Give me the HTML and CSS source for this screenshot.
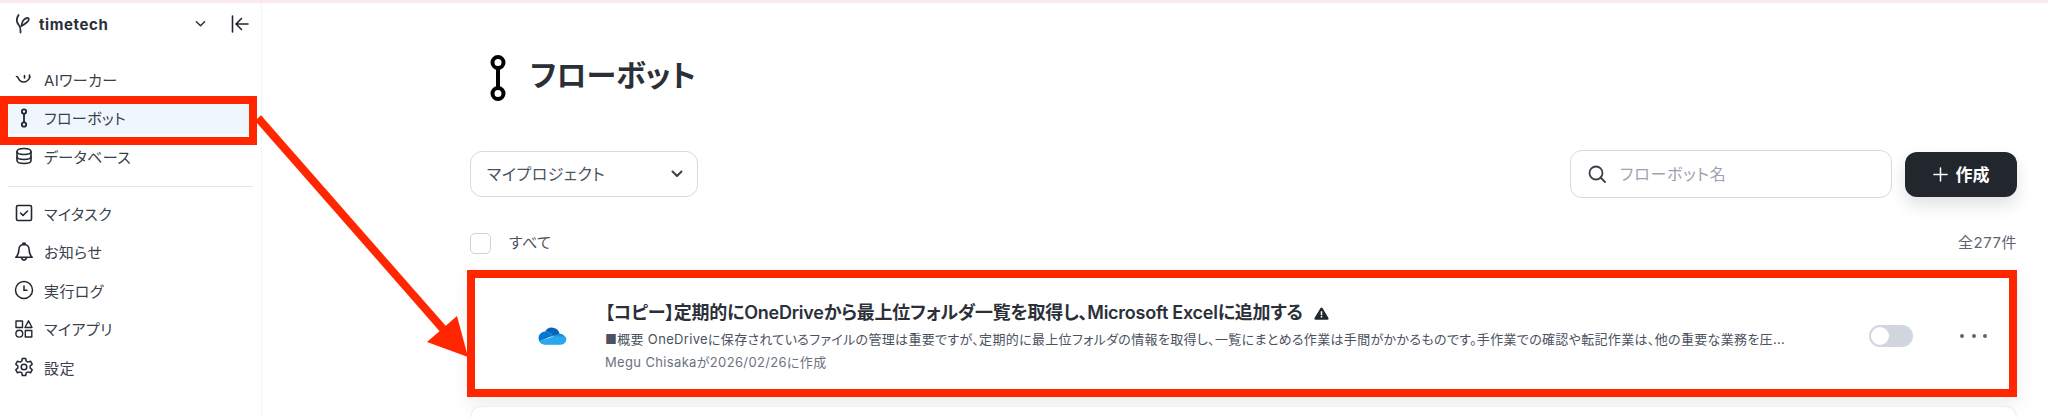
FILE: index.html
```html
<!DOCTYPE html>
<html lang="ja">

<head>
    <meta charset="UTF-8">
    <meta name="viewport" content="width=device-width, initial-scale=1.0">
    <title>フローボット</title>
    <link rel="stylesheet" href="styles.css">
</head>

<body>
    <div class="top-strip"></div>
    <div class="app">
        <aside class="sidebar">
            <div class="workspace">
                <svg class="logo" viewBox="0 0 15 20" fill="none" stroke="#2b3038" stroke-width="1.8" stroke-linecap="round"><path d="M2.5 1C.4 4.500.6 8.500 2.800 11c1.600 1.800 1.900 4.500 1.700 7.500"/><path d="M5.500 11.500c.4-3.500 2.500-7 5.500-7.500 2.300-.3 2.500 2 .2 4C9.500 9.500 7.500 11 5 12.200"/></svg>
                <span class="workspace-name">timetech</span>
                <svg class="workspace-chevron" viewBox="0 0 12 8" fill="none" stroke="#2b3038" stroke-width="1.6" stroke-linecap="round" stroke-linejoin="round"><path d="M1.500 1.500 6 6l4.500-4.500"/></svg>
                <svg class="collapse" viewBox="0 0 18 18" fill="none" stroke="#22272e" stroke-width="1.6" stroke-linecap="round" stroke-linejoin="round"><path d="M1.500 1v16M17 9H5.500M10.500 3.500 5 9l5.500 5.500"/></svg>
            </div>
            <nav class="nav-group">
                <a class="nav-item">
                    <svg class="nav-icon" viewBox="0 0 20 20" fill="none" stroke="#22272e" stroke-width="1.6" stroke-linecap="round"><path d="M2.500 7.500c1.200 0 1.500 1 2 2 .9 2 2.500 3.500 5 3.500 3 0 5-1.500 6.500-5"/><path d="M10.500 6.500v2.500M15.500 6v2"/></svg>
                    <span>AIワーカー</span>
                </a>
                <a class="nav-item active">
                    <svg class="nav-icon" viewBox="0 0 20 20" fill="none" stroke="#22272e" stroke-width="1.8"><circle cx="10" cy="3.500" r="2.200"/><circle cx="10" cy="16.500" r="2.200"/><path d="M10 5.500v9"/></svg>
                    <span>フローボット</span>
                </a>
                <a class="nav-item">
                    <svg class="nav-icon" viewBox="0 0 20 20" fill="none" stroke="#22272e" stroke-width="1.6"><path d="M3 5.500C3 3.500 6 2.500 10 2.500s7 1 7 3v9c0 2-3 3-7 3s-7-1-7-3z"/><path d="M3 5.500c0 2 3 3 7 3s7-1 7-3M3 10.500c0 2 3 3 7 3s7-1 7-3"/></svg>
                    <span>データベース</span>
                </a>
            </nav>
            <div class="nav-divider"></div>
            <nav class="nav-group">
                <a class="nav-item">
                    <svg class="nav-icon" viewBox="0 0 20 20" fill="none" stroke="#22272e" stroke-width="1.6" stroke-linecap="round" stroke-linejoin="round"><rect x="2.500" y="2.500" width="15" height="15" rx="1.500"/><path d="m6.500 10 2.500 2.500L13.500 8"/></svg>
                    <span>マイタスク</span>
                </a>
                <a class="nav-item">
                    <svg class="nav-icon" viewBox="0 0 20 20" fill="none" stroke="#22272e" stroke-width="1.6" stroke-linejoin="round"><path d="M10 2.500c-3.500 0-5.200 2.700-5.200 5.800 0 3-1 5.200-3 7h16.400c-2-1.800-3-4-3-7 0-3.100-1.700-5.800-5.200-5.800z"/><path d="M8.500 2.500a1.500 1.500 0 0 1 3 0M7.500 15.500c.3 1.500 1.300 2.500 2.500 2.500s2.200-1 2.500-2.500"/></svg>
                    <span>お知らせ</span>
                </a>
                <a class="nav-item">
                    <svg class="nav-icon" viewBox="0 0 20 20" fill="none" stroke="#22272e" stroke-width="1.5" stroke-linecap="round"><circle cx="10" cy="10" r="8.500"/><path d="M10 6v4.300h3"/></svg>
                    <span>実行ログ</span>
                </a>
                <a class="nav-item">
                    <svg class="nav-icon" viewBox="0 0 20 20" fill="none" stroke="#22272e" stroke-width="1.4" stroke-linejoin="round"><rect x="2" y="2" width="6.500" height="6.500"/><path d="M14.500 1.800 18 8.500h-7z"/><circle cx="5.300" cy="14.700" r="3.400"/><rect x="11.300" y="11.500" width="6.500" height="6.500"/></svg>
                    <span>マイアプリ</span>
                </a>
                <a class="nav-item">
                    <svg class="nav-icon" viewBox="0 0 20 20" fill="none" stroke="#22272e" stroke-width="1.5" stroke-linejoin="round"><path d="M8.300 1.500h3.400l.5 2.600 1.800 1 2.500-.9 1.700 3-2 1.700v2.200l2 1.700-1.700 3-2.500-.9-1.800 1-.5 2.600H8.300l-.5-2.600-1.800-1-2.500.9-1.700-3 2-1.700V8.900l-2-1.700 1.700-3 2.500.9 1.800-1z"/><circle cx="10" cy="10" r="2.800"/></svg>
                    <span>設定</span>
                </a>
            </nav>
        </aside>

        <main class="content">
            <div class="page-title">
                <svg class="title-icon" viewBox="0 0 16 46" fill="none" stroke="#000" stroke-width="4"><circle cx="8" cy="7.500" r="5.500"/><circle cx="8" cy="38.500" r="5.500"/><path d="M8 13v20"/></svg>
                <h1>フローボット</h1>
            </div>

            <div class="toolbar">
                <div class="project-select">
                    <span>マイプロジェクト</span>
                    <svg viewBox="0 0 12 8" fill="none" stroke="#3a404a" stroke-width="2" stroke-linecap="round" stroke-linejoin="round"><path d="M1.500 1.500 6 6l4.500-4.500"/></svg>
                </div>
                <div class="toolbar-right">
                    <div class="search-box">
                        <svg viewBox="0 0 18 18" fill="none" stroke="#3a404a" stroke-width="1.8" stroke-linecap="round"><circle cx="8" cy="8" r="6.500"/><path d="m12.500 12.500 4.500 4.500"/></svg>
                        <span>フローボット名</span>
                    </div>
                    <button class="create-btn" type="button">
                        <svg viewBox="0 0 16 16" fill="none" stroke="#fff" stroke-width="1.6" stroke-linecap="round"><path d="M8 1v14M1 8h14"/></svg>
                        <span>作成</span>
                    </button>
                </div>
            </div>

            <div class="list-head">
                <label class="select-all"><span class="checkbox"></span><span class="head-text">すべて</span></label>
                <span class="count head-text">全277件</span>
            </div>

            <div class="flow-card">
                <svg class="service-icon" viewBox="0 0 30 20">
                    <path fill="#0364b8" d="M11.500 6.500 17.500 10l4.800-2 .4-.1A8 8 0 0 0 8 5.600l.2 0c1.200 0 2.300.3 3.300.9z"/>
                    <path fill="#0078d4" d="M11.500 6.500A6.400 6.400 0 0 0 8.200 5.600h-.1A6.500 6.500 0 0 0 2.400 15.300L10 12.200l3.400-1.400 4.100-.8z"/>
                    <path fill="#1490df" d="M22.700 7.900h-.4c-.5 0-1 .1-1.500.2L17.500 10 13.400 11.700 10 13l-7.600 2.300A6.500 6.500 0 0 0 8.100 18.600h14.600l6-5a5.500 5.500 0 0 0-6-5.700z"/>
                    <path fill="#28a8ea" d="M28.700 10.700 17.500 10 13.400 11.700 10 13 2.400 15.300A6.500 6.500 0 0 0 8.100 18.600h14.600a5.500 5.500 0 0 0 6-7.900z"/>
                </svg>
                <div class="flow-body">
                    <div class="flow-title">
                        <span>【コピー】定期的にOneDriveから最上位フォルダ一覧を取得し、Microsoft Excelに追加する</span>
                        <svg viewBox="0 0 16 14"><path fill="#22272e" d="M8 .5c.5 0 .9.300 1.200.8l6.300 10.500c.5.900-.1 1.900-1.100 1.900H1.600c-1 0-1.600-1-1.100-1.900L6.800 1.300C7.100.800 7.500.500 8 .5z"/><path fill="#fff" d="M7.200 4.500h1.600v4.300H7.200zM7.200 9.800h1.600v1.500H7.200z"/></svg>
                    </div>
                    <p class="flow-desc">■概要 OneDriveに保存されているファイルの管理は重要ですが、定期的に最上位フォルダの情報を取得し、一覧にまとめる作業は手間がかかるものです。手作業での確認や転記作業は、他の重要な業務を圧...</p>
                    <p class="flow-meta">Megu Chisakaが2026/02/26に作成</p>
                </div>
                <div class="toggle"><span class="toggle-knob"></span></div>
                <div class="more-btn"><span></span><span></span><span></span></div>
            </div>

            <div class="flow-card-next"></div>
        </main>
    </div>

    <!-- red markup drawn on top of the screenshot -->
    <div class="mark mark-nav"></div>
    <div class="mark mark-card"></div>
    <svg class="mark-arrow" viewBox="0 0 480 400" width="480" height="400">
        <path d="M258 118 L444 330" stroke="#ff2600" stroke-width="8" fill="none"/>
        <path fill="#ff2600" d="M468 357 L427 342 L457 316 Z"/>
    </svg>
</body>

</html>
```

FILE: styles.css
```css
* {
    box-sizing: border-box;
}

html,
body {
    height: 100%;
}

body {
    margin: 0;
    overflow: hidden;
    position: relative;
    background-color: #fff;
    font-family: Inter, "Noto Sans CJK JP", sans-serif;
    font-feature-settings: "palt";
    color: #2b3038;
}

.top-strip {
    height: 3px;
    background-color: #fbe9ee;
}

.app {
    display: flex;
    height: 414px;
}

.sidebar {
    width: 262px;
    flex-shrink: 0;
    padding: 0 8px;
    border-right: 1px solid #f3f4f6;
}

.workspace {
    display: flex;
    align-items: center;
    height: 42px;
    padding: 0 4px 0 8px;
}

.logo {
    width: 15px;
    height: 20px;
}

.workspace-name {
    margin-left: 8px;
    font-size: 15px;
    font-weight: 700;
    letter-spacing: 0.6px;
}

.workspace-chevron {
    width: 11px;
    height: 8px;
    margin-left: auto;
}

.collapse {
    width: 18px;
    height: 18px;
    margin-left: 25px;
}

.nav-group {
    display: flex;
    flex-direction: column;
    gap: 6.5px;
}

.sidebar > .nav-group:first-of-type {
    margin-top: 18px;
}

.nav-item {
    display: flex;
    align-items: center;
    gap: 10px;
    height: 32px;
    padding: 0 6px;
    border-radius: 4px;
    font-size: 15px;
    letter-spacing: 0.4px;
    color: #3a404a;
}

.nav-item.active {
    background-color: #eff6fd;
}

.nav-icon {
    width: 20px;
    height: 20px;
    flex-shrink: 0;
}

.nav-divider {
    height: 1px;
    margin: 14px 0 10px;
    background-color: #e3e5e8;
}

.content {
    flex: 1;
    padding: 52px 31px 0 208px;
    display: flex;
    flex-direction: column;
    min-width: 0;
}

.page-title {
    display: flex;
    align-items: center;
    height: 46px;
    padding-left: 20px;
    gap: 24px;
}

.title-icon {
    width: 16px;
    height: 46px;
}

h1 {
    margin: 0 0 10px;
    font-size: 30px;
    font-weight: 700;
    color: #2b3038;
}

.toolbar {
    display: flex;
    justify-content: space-between;
    align-items: center;
    margin-top: 49px;
    height: 48px;
}

.project-select {
    display: flex;
    align-items: center;
    justify-content: space-between;
    width: 228px;
    height: 46px;
    padding: 0 14px 0 16px;
    border: 1px solid #d5dae2;
    border-radius: 12px;
    font-size: 16px;
    letter-spacing: 0.5px;
    color: #4b5260;
}

.project-select span {
    margin-bottom: 2px;
}

.project-select svg {
    width: 12px;
    height: 8px;
}

.toolbar-right {
    display: flex;
    align-items: center;
    gap: 13px;
}

.search-box {
    display: flex;
    align-items: center;
    gap: 14px;
    width: 322px;
    height: 48px;
    padding: 0 17px;
    border: 1px solid #d5dae2;
    border-radius: 12px;
    font-size: 16px;
    letter-spacing: 0.8px;
    color: #9ca3af;
}

.search-box span {
    margin-bottom: 2px;
}

.search-box svg {
    width: 18px;
    height: 18px;
}

.create-btn {
    display: flex;
    align-items: center;
    justify-content: center;
    gap: 8px;
    width: 112px;
    height: 45px;
    border: none;
    border-radius: 12px;
    background-color: #22272e;
    color: #fff;
    font-family: inherit;
    font-feature-settings: inherit;
    font-size: 17px;
    font-weight: 700;
    box-shadow: 0 8px 16px rgba(30, 40, 60, 0.14);
}

.create-btn span {
    margin-bottom: 2px;
}

.create-btn svg {
    width: 15px;
    height: 15px;
}

.list-head {
    display: flex;
    justify-content: space-between;
    align-items: center;
    margin-top: 27px;
    height: 36px;
    font-size: 15px;
    letter-spacing: 0.5px;
    color: #4b5260;
}

.head-text {
    margin-bottom: 3px;
}

.select-all {
    display: flex;
    align-items: center;
    gap: 18px;
}

.checkbox {
    width: 21px;
    height: 21px;
    border: 1px solid #cdd3dc;
    border-radius: 5px;
}

.count {
    color: #5f6672;
}

.flow-card {
    display: flex;
    align-items: center;
    height: 127px;
    margin-top: 9px;
    padding: 0 30px 0 67px;
    background-color: #fff;
    box-shadow: 0 8px 20px rgba(0, 0, 0, 0.08);
}

.service-icon {
    width: 30px;
    height: 20px;
    flex-shrink: 0;
    margin: 5px 38px 0 0;
}

.flow-body {
    flex: 1;
    min-width: 0;
    padding-top: 6px;
}

.flow-title {
    display: flex;
    align-items: center;
    gap: 11px;
    font-size: 18px;
    font-weight: 600;
    letter-spacing: -0.25px;
    line-height: 24px;
    white-space: nowrap;
}

.flow-title svg {
    width: 15px;
    height: 13px;
}

.flow-desc {
    margin: 4px 0 0;
    font-size: 13px;
    letter-spacing: 0.33px;
    line-height: 20px;
    color: #4b5260;
    white-space: nowrap;
}

.flow-meta {
    margin: 3px 0 0;
    font-size: 13px;
    letter-spacing: 0.35px;
    line-height: 20px;
    color: #6b7280;
}

.toggle {
    position: relative;
    width: 44px;
    height: 22px;
    flex-shrink: 0;
    margin-top: 5px;
    border-radius: 11px;
    background-color: #d1d6de;
}

.toggle-knob {
    position: absolute;
    top: 2px;
    left: 2px;
    width: 18px;
    height: 18px;
    border-radius: 50%;
    background-color: #fff;
}

.more-btn {
    display: flex;
    gap: 7.5px;
    margin: 5px 0 0 47px;
}

.more-btn span {
    width: 4px;
    height: 4px;
    border-radius: 50%;
    background-color: #5f6672;
}

.flow-card-next {
    height: 11px;
    margin-top: 9px;
    border: 1px solid #eceef1;
    border-bottom: none;
    border-radius: 12px 12px 0 0;
    background-color: #fff;
}

.mark {
    position: absolute;
    border: 8px solid #ff2600;
    pointer-events: none;
}

.mark-nav {
    left: 0;
    top: 96px;
    width: 257px;
    height: 49px;
}

.mark-card {
    left: 467px;
    top: 270px;
    width: 1550px;
    height: 127px;
}

.mark-arrow {
    position: absolute;
    left: 0;
    top: 0;
    pointer-events: none;
}
```
